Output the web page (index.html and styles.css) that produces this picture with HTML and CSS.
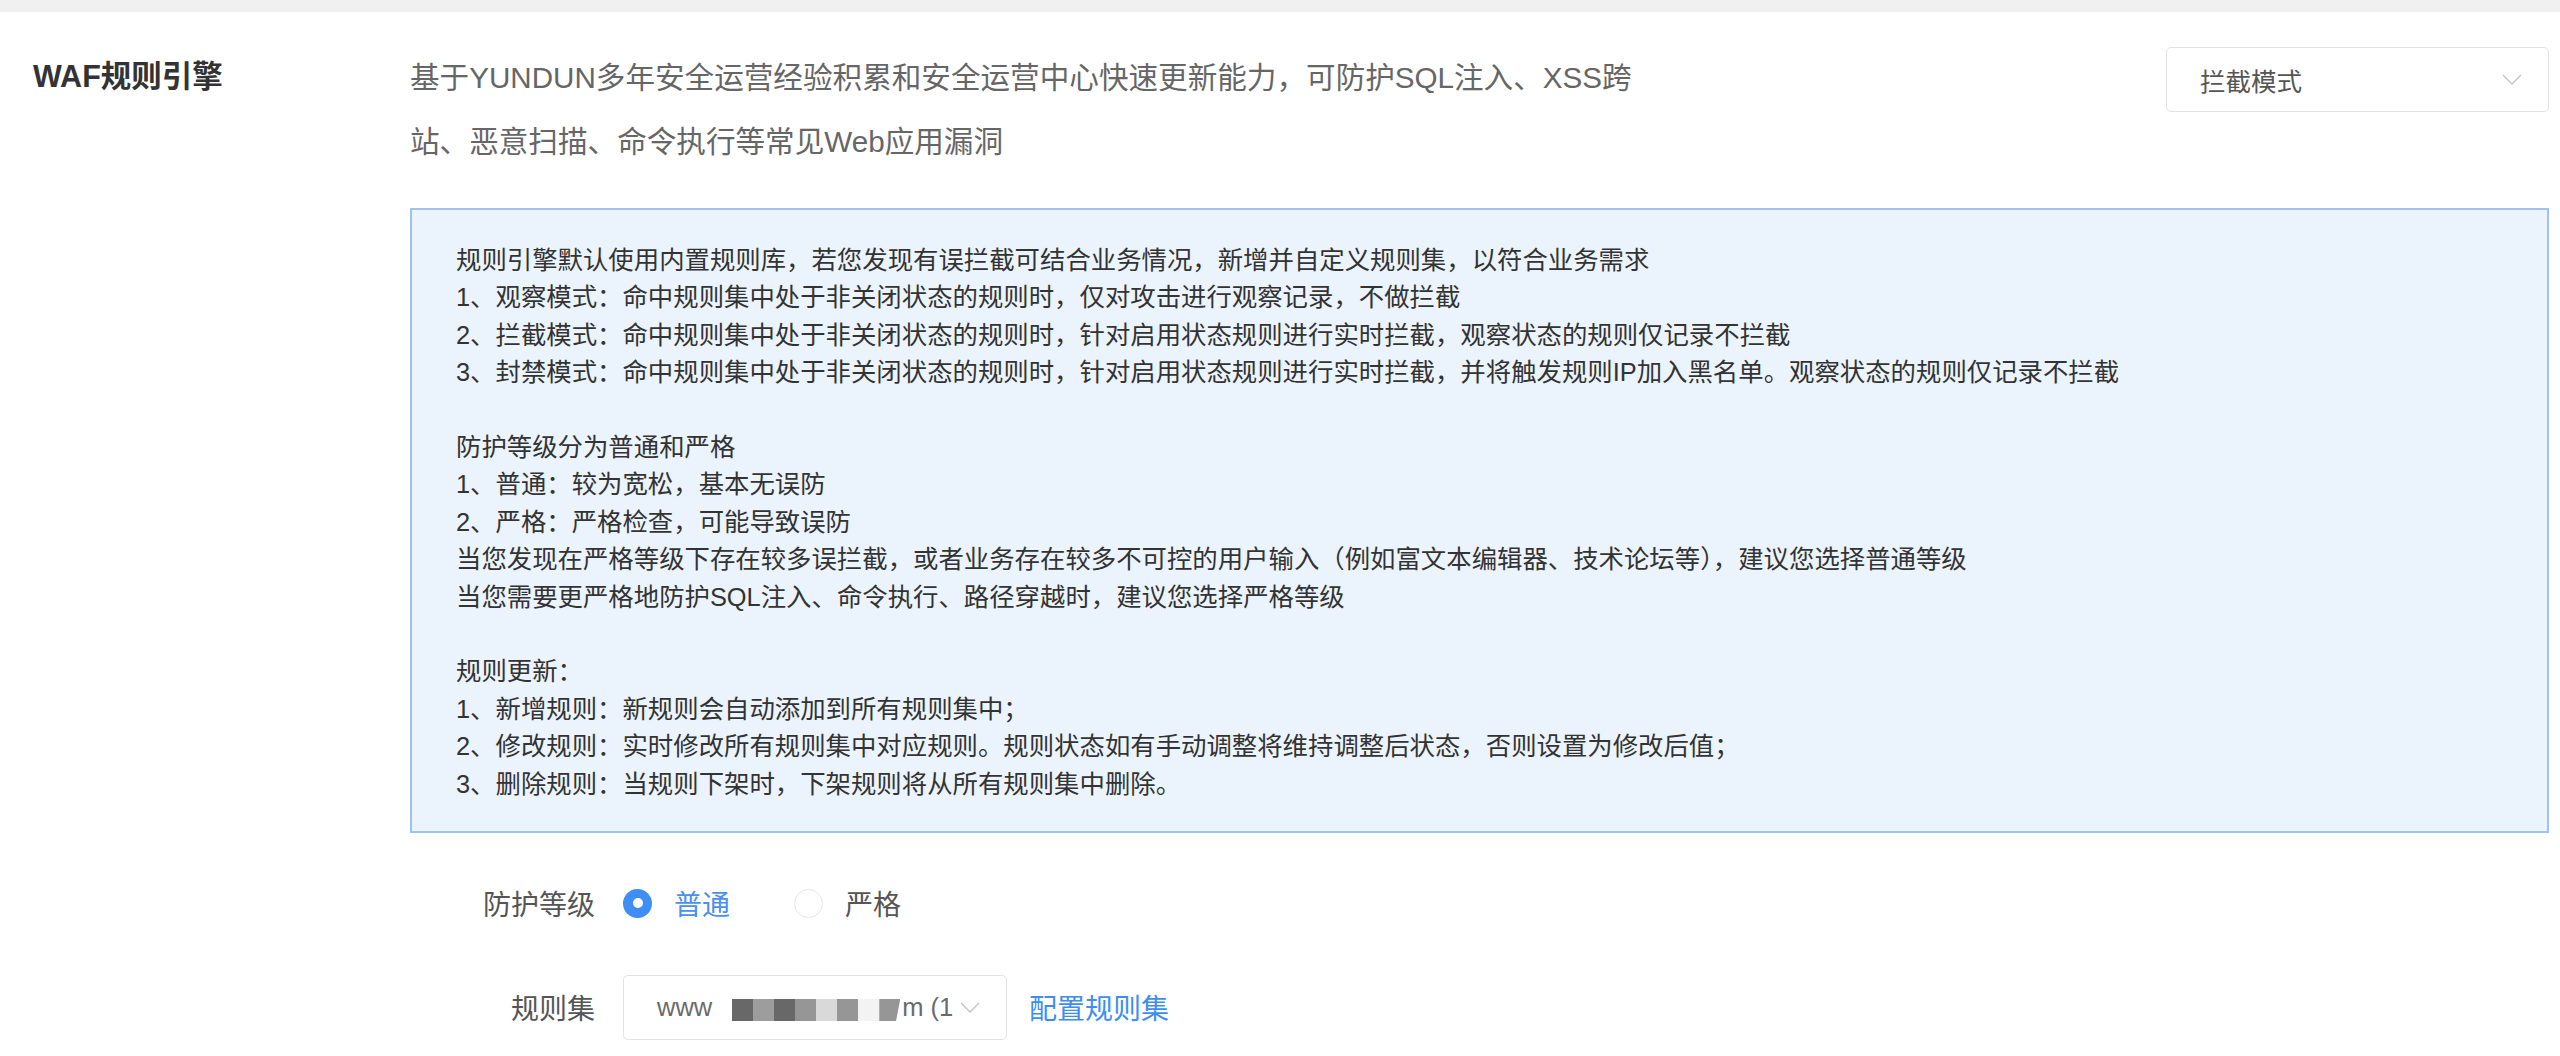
FILE: index.html
```html
<!DOCTYPE html>
<html lang="zh-CN">
<head>
<meta charset="utf-8">
<title>WAF规则引擎</title>
<link rel="stylesheet" href="styles.css">
</head>
<body>
<div class="topbar"></div>
<section class="engine">
  <div class="engine-label">WAF规则引擎</div>
  <div class="engine-body">
    <div class="engine-head">
      <p class="desc">基于YUNDUN多年安全运营经验积累和安全运营中心快速更新能力，可防护SQL注入、XSS跨站、恶意扫描、命令执行等常见Web应用漏洞</p>
      <div class="select select-mode">
        <span class="select-text">拦截模式</span>
        <svg class="chevron" viewBox="0 0 20 11" width="20" height="11"><polyline points="1,1 10,10 19,1" fill="none" stroke="#c4c4c4" stroke-width="1.4"/></svg>
      </div>
    </div>
    <div class="notice">
      <p>规则引擎默认使用内置规则库，若您发现有误拦截可结合业务情况，新增并自定义规则集，以符合业务需求<br>
      1、观察模式：命中规则集中处于非关闭状态的规则时，仅对攻击进行观察记录，不做拦截<br>
      2、拦截模式：命中规则集中处于非关闭状态的规则时，针对启用状态规则进行实时拦截，观察状态的规则仅记录不拦截<br>
      3、封禁模式：命中规则集中处于非关闭状态的规则时，针对启用状态规则进行实时拦截，并将触发规则IP加入黑名单。观察状态的规则仅记录不拦截</p>
      <p>防护等级分为普通和严格<br>
      1、普通：较为宽松，基本无误防<br>
      2、严格：严格检查，可能导致误防<br>
      当您发现在严格等级下存在较多误拦截，或者业务存在较多不可控的用户输入（例如富文本编辑器、技术论坛等），建议您选择普通等级<br>
      当您需要更严格地防护SQL注入、命令执行、路径穿越时，建议您选择严格等级</p>
      <p>规则更新：<br>
      1、新增规则：新规则会自动添加到所有规则集中；<br>
      2、修改规则：实时修改所有规则集中对应规则。规则状态如有手动调整将维持调整后状态，否则设置为修改后值；<br>
      3、删除规则：当规则下架时，下架规则将从所有规则集中删除。</p>
    </div>
    <div class="form">
      <div class="form-row">
        <span class="form-label">防护等级</span>
        <div class="radios">
          <span class="radio radio-checked"><span class="radio-dot"></span></span>
          <span class="radio-text radio-text-active">普通</span>
          <span class="radio radio-off"></span>
          <span class="radio-text">严格</span>
        </div>
      </div>
      <div class="form-row">
        <span class="form-label">规则集</span>
        <div class="select select-ruleset">
          <span class="rs-text">www</span>
          <span class="blur">
            <span class="b b1"></span><span class="b b2"></span><span class="b b1"></span><span class="b b3"></span><span class="b b4"></span><span class="b b3"></span><span class="b b5"></span><span class="b b3 b-last"></span>
          </span>
          <span class="rs-text">m (1</span>
          <svg class="chevron chevron-rs" viewBox="0 0 20 11" width="20" height="11"><polyline points="1,1 10,10 19,1" fill="none" stroke="#c4c4c4" stroke-width="1.4"/></svg>
        </div>
        <a class="link" href="#">配置规则集</a>
      </div>
    </div>
  </div>
</section>
</body>
</html>
```

FILE: styles.css
```css
html, body {
  margin: 0;
  padding: 0;
  background: #ffffff;
}

body {
  font-family: "Liberation Sans", "Noto Sans CJK SC", sans-serif;
  color: #333333;
}

.topbar {
  height: 12px;
  background: #f0f0f0;
}

.engine {
  display: flex;
  padding: 34px 11px 0 33px;
}

.engine-label {
  width: 377px;
  flex-shrink: 0;
  font-size: 30.5px;
  font-weight: 700;
  line-height: 60px;
  color: #333333;
}

.engine-body {
  flex: 1;
  min-width: 0;
}

.engine-head {
  display: flex;
  justify-content: space-between;
  align-items: flex-start;
}

.desc {
  margin: 0;
  max-width: 1240px;
  font-size: 29.6px;
  line-height: 64px;
  color: #666666;
}

.select {
  box-sizing: border-box;
  height: 65px;
  border: 1.5px solid #e3e3e3;
  border-radius: 5px;
  background: #ffffff;
  display: flex;
  align-items: center;
}

.select-mode {
  width: 383px;
  margin-top: 1px;
  padding: 0 26px 0 33px;
  justify-content: space-between;
}

.select-text {
  font-size: 25.5px;
  color: #555555;
}

.chevron {
  display: block;
}

.notice {
  margin-top: 34px;
  border: 2px solid #9fc2f1;
  background: #ebf3fd;
  padding: 32px 40px 28px 44px;
  font-size: 25.4px;
  line-height: 37.4px;
  color: #333333;
}

.notice p {
  margin: 0 0 37.4px 0;
}

.notice p:last-child {
  margin-bottom: 0;
}

.form {
  margin-top: 37px;
  display: flex;
  flex-direction: column;
  gap: 38px;
}

.form-row {
  display: flex;
  align-items: center;
  height: 66px;
}

.form-label {
  width: 185px;
  margin-right: 28px;
  text-align: right;
  font-size: 28px;
  color: #555555;
}

.radios {
  display: flex;
  align-items: center;
}

.radio {
  box-sizing: border-box;
  width: 29px;
  height: 29px;
  border-radius: 50%;
  display: flex;
  align-items: center;
  justify-content: center;
}

.radio-checked {
  background: #3f8ef5;
}

.radio-dot {
  width: 10px;
  height: 10px;
  border-radius: 50%;
  background: #ffffff;
}

.radio-off {
  border: 1.5px solid #e6e6e6;
  margin-left: 64px;
}

.radio-text {
  margin-left: 22px;
  font-size: 28px;
  color: #555555;
}

.radio-text-active {
  color: #4a90ee;
}

.select-ruleset {
  width: 384px;
  padding: 0 26px 0 33px;
}

.rs-text {
  font-size: 25.5px;
  color: #6a6a6a;
}

.blur {
  display: flex;
  margin: 6px 2px 0 20px;
  height: 22px;
}

.b {
  width: 21px;
  height: 22px;
}

.b1 { background: #686868; }
.b2 { background: #9d9d9d; }
.b3 { background: #969696; }
.b4 { background: #d9d9d9; }
.b5 { background: #f3f3f3; }

.b-last {
  clip-path: polygon(0 0, 100% 0, 80% 100%, 0 100%);
}

.chevron-rs {
  margin-left: auto;
}

.link {
  margin-left: 22px;
  font-size: 28px;
  color: #3d8ef0;
  text-decoration: none;
}
```
